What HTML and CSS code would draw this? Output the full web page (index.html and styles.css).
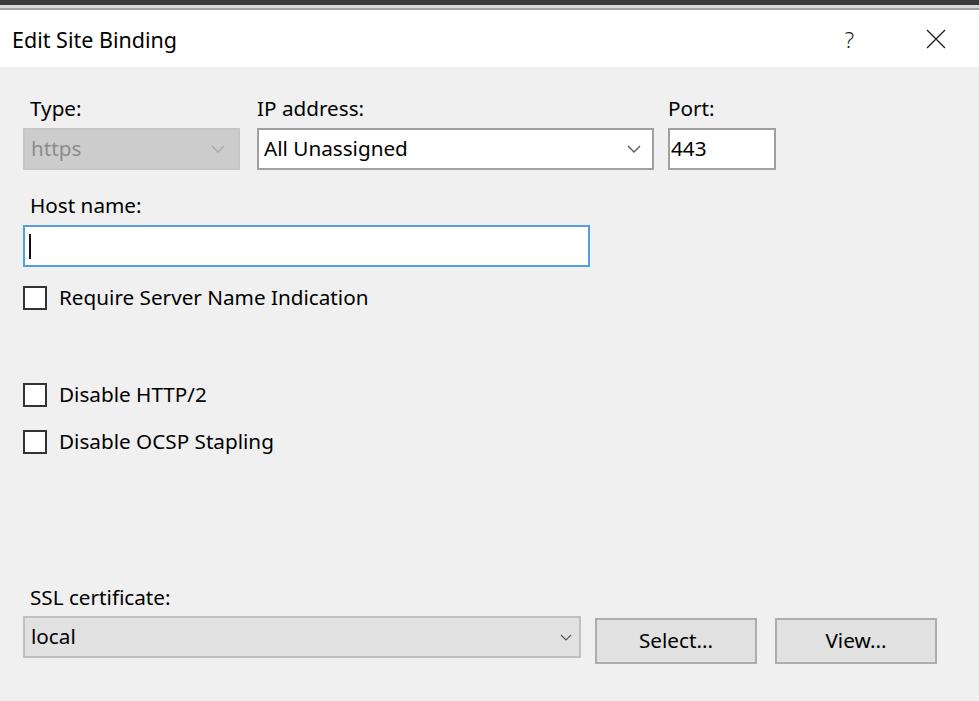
FILE: index.html
```html
<!DOCTYPE html>
<html>
<head>
<meta charset="utf-8">
<link rel="stylesheet" href="styles.css">
</head>
<body>
<div class="window">
  <div class="topbar"></div>
  <div class="topedge"></div>
  <div class="titlebar">
    <div class="title">Edit Site Binding</div>
    <div class="title-actions">
      <span class="help">?</span>
      <svg class="close" width="20" height="20" viewBox="0 0 20 20"><path d="M1 1L19 19M19 1L1 19" stroke="#222" stroke-width="1.4" fill="none"/></svg>
    </div>
  </div>
  <div class="content">
    <div class="row1">
      <div class="field f-type">
        <div class="label indent">Type:</div>
        <div class="select disabled">
          <span class="val">https</span>
          <svg class="chev" width="14" height="8" viewBox="0 0 14 8"><polyline points="1,1 7,7 13,1" fill="none" stroke="#a8a8a8" stroke-width="1.3"/></svg>
        </div>
      </div>
      <div class="field f-ip">
        <div class="label">IP address:</div>
        <div class="select white">
          <span class="val">All Unassigned</span>
          <svg class="chev" width="14" height="8" viewBox="0 0 14 8"><polyline points="1,1 7,7 13,1" fill="none" stroke="#555" stroke-width="1.3"/></svg>
        </div>
      </div>
      <div class="field f-port">
        <div class="label">Port:</div>
        <div class="input port"><span class="val">443</span></div>
      </div>
    </div>
    <div class="label indent host-label">Host name:</div>
    <div class="input host"><span class="caret"></span></div>
    <div class="check c1"><span class="box"></span><span class="ctext">Require Server Name Indication</span></div>
    <div class="check c2"><span class="box"></span><span class="ctext">Disable HTTP/2</span></div>
    <div class="check c3"><span class="box"></span><span class="ctext">Disable OCSP Stapling</span></div>
    <div class="label indent ssl-label">SSL certificate:</div>
    <div class="row-ssl">
      <div class="select gray ssl">
        <span class="val">local</span>
        <svg class="chev" width="12" height="7" viewBox="0 0 12 7"><polyline points="1,1 6,6 11,1" fill="none" stroke="#555" stroke-width="1.2"/></svg>
      </div>
      <div class="button">Select...</div>
      <div class="button">View...</div>
    </div>
  </div>
</div>
</body>
</html>
```
FILE: styles.css
```css
html, body {
  margin: 0;
  padding: 0;
}
body {
  width: 979px;
  height: 701px;
  overflow: hidden;
  background: #f0f0f0;
  font-family: "Noto Sans", "Open Sans", sans-serif;
  color: #000;
}
.window {
  display: flex;
  flex-direction: column;
  height: 701px;
}
.topbar {
  height: 5px;
  background: #3a3a3a;
}
.topedge {
  height: 3px;
  background: #dadada;
  border-bottom: 2px solid #a4a4a4;
}
.titlebar {
  height: 57px;
  background: #ffffff;
  display: flex;
  align-items: center;
  justify-content: space-between;
  padding-left: 12px;
}
.title {
  font-size: 21.5px;
  color: #000;
  padding-top: 1px;
}
.title-actions {
  display: flex;
  align-items: center;
  padding-right: 33px;
}
.help {
  font-size: 22px;
  font-weight: 300;
  color: #222;
  margin-right: 72px;
}
.content {
  flex: 1;
  background: #f0f0f0;
  padding: 30px 0 0 23px;
  display: flex;
  flex-direction: column;
  align-items: flex-start;
}
.label {
  font-size: 20.7px;
  line-height: 22px;
  height: 24px;
}
.indent {
  padding-left: 7px;
}
.row1 {
  display: flex;
}
.field {
  display: flex;
  flex-direction: column;
  gap: 7px;
}
.f-type { width: 217px; margin-right: 17px; }
.f-ip { width: 397px; margin-right: 14px; }
.f-port { width: 108px; }
.select, .input {
  box-sizing: border-box;
  height: 42px;
  display: flex;
  align-items: center;
  font-size: 20.7px;
  position: relative;
}
.val {
  padding-bottom: 3px;
}
.select {
  justify-content: space-between;
  padding: 0 10px 0 7px;
}
.select.disabled {
  background: #cccccc;
  border: 2px solid #c6c6c6;
  color: #8c8c8c;
  padding-left: 6px;
}
.select.disabled .chev { margin-right: 3px; }
.select.white {
  background: #fff;
  border: 2px solid #a0a0a0;
  padding-left: 5px;
}
.select.white .chev { margin-right: 1px; }
.input.port {
  background: #fff;
  border: 2px solid #a0a0a0;
  width: 108px;
  padding-left: 1px;
}
.host-label {
  margin-top: 24px;
}
.input.host {
  margin-top: 7px;
  width: 567px;
  background: #fff;
  border: 2px solid #4f9fe2;
  padding-left: 4px;
}
.caret {
  display: block;
  width: 2px;
  height: 25px;
  background: #111;
}
.check {
  display: flex;
  align-items: center;
  height: 24px;
}
.c1 { margin-top: 19px; }
.c2 { margin-top: 73px; }
.c3 { margin-top: 23px; }
.box {
  box-sizing: border-box;
  width: 24px;
  height: 24px;
  border: 2px solid #333;
  background: #fff;
  margin-right: 12px;
}
.ctext {
  font-size: 20.7px;
  line-height: 24px;
  padding-bottom: 3px;
}
.ssl-label {
  margin-top: 132px;
}
.row-ssl {
  margin-top: 6px;
  display: flex;
  align-items: flex-start;
}
.select.gray {
  width: 558px;
  background: #e1e1e1;
  border: 2px solid #c0c0c0;
  padding-left: 6px;
  padding-right: 7px;
  margin-right: 14px;
}
.button {
  box-sizing: border-box;
  margin-top: 2px;
  width: 162px;
  height: 46px;
  background: #e1e1e1;
  border: 2px solid #adadad;
  display: flex;
  align-items: center;
  justify-content: center;
  font-size: 20.7px;
  margin-right: 18px;
  padding-bottom: 2px;
}
```
